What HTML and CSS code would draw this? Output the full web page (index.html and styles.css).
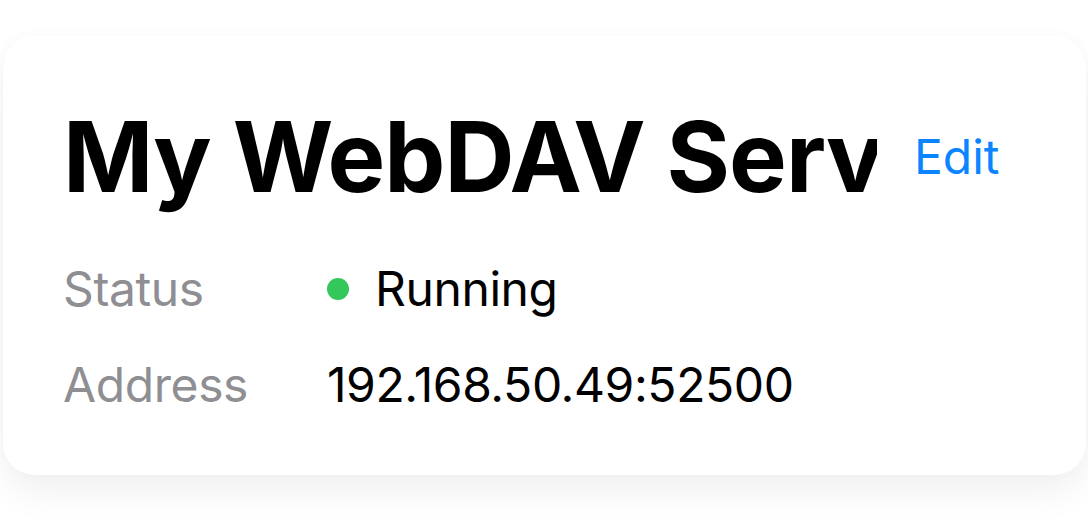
FILE: index.html
```html
<!DOCTYPE html>
<html lang="en">
<head>
  <meta charset="UTF-8">
  <meta name="viewport" content="width=device-width, initial-scale=1.0">
  <title>Server</title>
  <link rel="stylesheet" href="styles.css">
</head>
<body>
  <div class="card">
    <div class="card-header">
      <h1 class="server-name">My WebDAV Server</h1>
      <a class="edit-link" href="#">Edit</a>
    </div>

    <div class="info">
      <span class="info-label">Status</span>
      <span class="info-value"><span class="status-dot"></span>Running</span>

      <span class="info-label">Address</span>
      <span class="info-value">192.168.50.49:52500</span>
    </div>
  </div>
</body>
</html>
```

FILE: styles.css
```css
body {
  margin: 0;
  padding: 36px 2px 45px 3px;
  background-color: #fff;
  font-family: Inter, "Noto Sans", sans-serif;
}

.card {
  height: 439px;
  box-sizing: border-box;
  padding: 62px 60px 0 60px;
  background-color: #fff;
  border-radius: 32px;
  box-shadow: 0 18px 36px rgba(0, 0, 0, 0.06), 0 0 16px rgba(0, 0, 0, 0.02);
}

.card-header {
  display: flex;
  align-items: center;
}

/* long names get cut at the edge, not wrapped */
.server-name {
  width: 814px;
  flex-shrink: 0;
  margin: 0;
  font-size: 97px;
  font-weight: 700;
  line-height: 1.21;
  letter-spacing: -1px;
  color: #000;
  white-space: nowrap;
  overflow: hidden;
}

.edit-link {
  margin-left: 37px;
  font-size: 48px;
  color: #0a84ff;
  text-decoration: none;
}

.info {
  display: grid;
  grid-template-columns: 264px 1fr;
  row-gap: 38px;
  margin-top: 45px;
  font-size: 48px;
  line-height: 58px;
  letter-spacing: -0.4px;
}

.info-label {
  color: #8e8e93;
}

.info-value {
  display: flex;
  align-items: center;
  color: #000;
}

.status-dot {
  width: 22px;
  height: 22px;
  margin-right: 26px;
  border-radius: 50%;
  background-color: #34c759;
}
```
